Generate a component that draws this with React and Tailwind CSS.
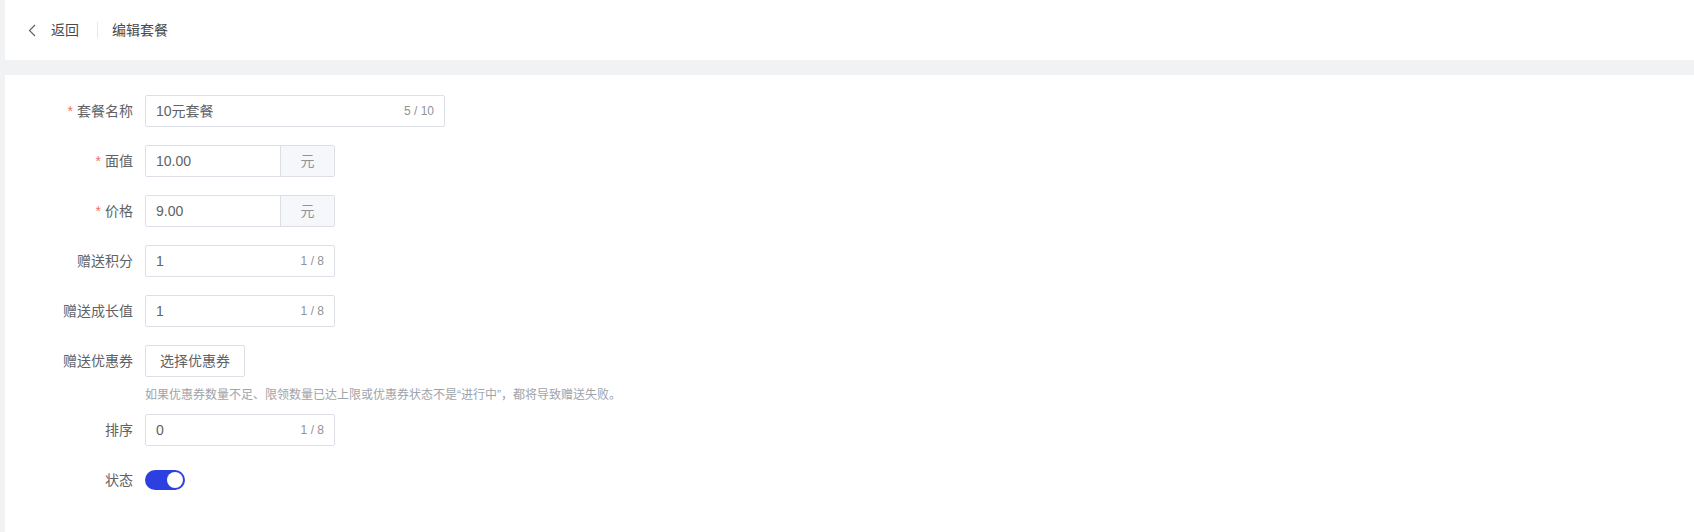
import { useState } from "react";

const fontStack = {
  fontFamily: '"Liberation Sans", "Noto Sans CJK SC", sans-serif',
};

const FormItem = ({ label, required, children, className = "" }) => (
  <div className={`flex items-start ${className}`}>
    <label className="w-[140px] shrink-0 h-8 flex items-center justify-end pr-3 text-sm text-[#606266]">
      {required && <span className="text-[#f56c6c] mr-1">*</span>}
      {label}
    </label>
    <div className="flex-1">{children}</div>
  </div>
);

const CountInput = ({ value, max, width }) => (
  <div
    className={`${width} h-8 flex items-center border border-[#dcdfe6] rounded-[2px] bg-white px-[10px]`}
  >
    <span className="flex-1 text-sm text-[#606266]">{value}</span>
    <span className="text-xs text-[#909399]">
      {String(value).length} / {max}
    </span>
  </div>
);

const AppendInput = ({ value, unit }) => (
  <div className="w-[190px] h-8 flex border border-[#dcdfe6] rounded-[2px]">
    <div className="flex-1 flex items-center px-[10px] text-sm text-[#606266] bg-white">
      {value}
    </div>
    <div className="w-[54px] flex items-center justify-center border-l border-[#dcdfe6] bg-[#f5f7fa] text-sm text-[#909399]">
      {unit}
    </div>
  </div>
);

export default function App() {
  const [enabled, setEnabled] = useState(true);

  return (
    <div
      className="min-h-[532px] bg-[#f1f2f4] pl-[5px] flex flex-col"
      style={fontStack}
    >
      {/* Header */}
      <div className="h-[60px] bg-white flex items-center pl-[23px]">
        <svg width="8" height="13" viewBox="0 0 8 13" className="text-[#606266]">
          <polyline
            points="7,1 1.5,6.5 7,12"
            fill="none"
            stroke="currentColor"
            strokeWidth="1.2"
          />
        </svg>
        <span className="ml-[15px] text-sm font-normal text-[#4a4a4a]">返回</span>
        <span className="ml-[18px] mr-[14px] h-4 w-px bg-[#e4e6eb]" />
        <span className="text-sm font-normal text-[#4a4a4a]">编辑套餐</span>
      </div>

      <div className="h-[15px]" />

      {/* Form */}
      <div className="flex-1 bg-white pt-5 pb-8 flex flex-col gap-[18px]">
        <FormItem label="套餐名称" required>
          <CountInput value="10元套餐" max={10} width="w-[300px]" />
        </FormItem>
        <FormItem label="面值" required>
          <AppendInput value="10.00" unit="元" />
        </FormItem>
        <FormItem label="价格" required>
          <AppendInput value="9.00" unit="元" />
        </FormItem>
        <FormItem label="赠送积分">
          <CountInput value="1" max={8} width="w-[190px]" />
        </FormItem>
        <FormItem label="赠送成长值">
          <CountInput value="1" max={8} width="w-[190px]" />
        </FormItem>
        <FormItem label="赠送优惠券" className="-mb-[9px]">
          <button className="h-8 px-[14px] border border-[#dcdfe6] rounded-[2px] bg-white text-sm text-[#606266]">
            选择优惠券
          </button>
          <p className="mt-[8px] text-xs leading-5 text-[#a0a3a8]">
            如果优惠券数量不足、限领数量已达上限或优惠券状态不是“进行中”，都将导致赠送失败。
          </p>
        </FormItem>
        <FormItem label="排序">
          <CountInput value="0" max={8} width="w-[190px]" />
        </FormItem>
        <FormItem label="状态">
          <div className="h-8 flex items-center">
            <button
              onClick={() => setEnabled(!enabled)}
              className={`relative w-10 h-5 rounded-full ${
                enabled ? "bg-[#2c3fe0]" : "bg-[#dcdfe6]"
              }`}
            >
              <span
                className={`absolute top-[2px] w-4 h-4 rounded-full bg-white ${
                  enabled ? "left-[22px]" : "left-[2px]"
                }`}
              />
            </button>
          </div>
        </FormItem>
      </div>
    </div>
  );
}
